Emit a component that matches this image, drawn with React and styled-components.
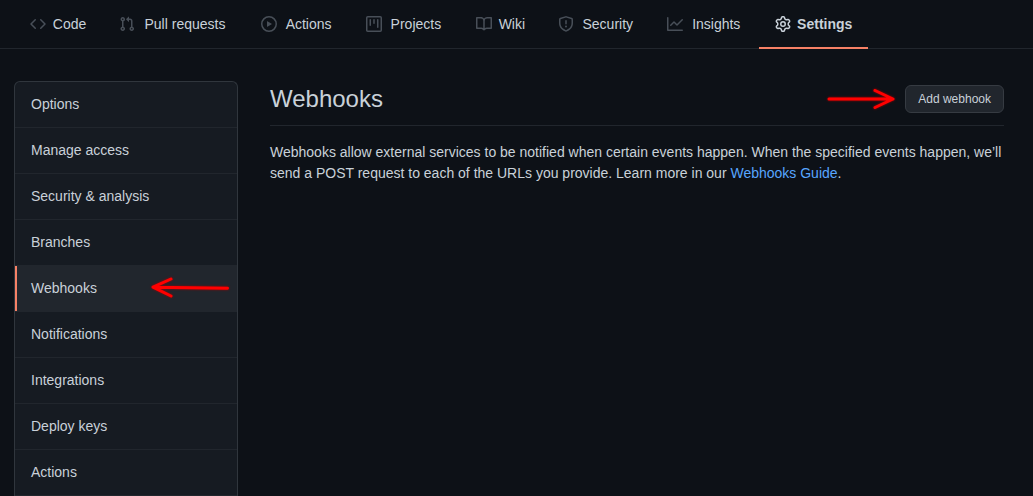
import React from 'react';
import styled, { createGlobalStyle, css } from 'styled-components';

const color = {
  canvas: '#0d1117',
  panel: '#161b22',
  raised: '#21262d',
  line: '#21262d',
  border: '#30363d',
  text: '#c9d1d9',
  faint: '#484f58',
  accent: '#f78166',
  link: '#58a6ff',
};

const GlobalStyle = createGlobalStyle`
  *, *::before, *::after { box-sizing: border-box; }
  body {
    margin: 0;
    background: ${color.canvas};
    color: ${color.text};
    font-family: "Liberation Sans", Arial, Helvetica, sans-serif;
    font-size: 14px;
    line-height: 21px;
  }
`;

const icons = {
  code: 'M4.72 3.22a.75.75 0 011.06 1.06L2.06 8l3.72 3.72a.75.75 0 11-1.06 1.06L.47 8.53a.75.75 0 010-1.06l4.25-4.25zm6.56 0a.75.75 0 10-1.06 1.06L13.94 8l-3.72 3.72a.75.75 0 101.06 1.06l4.25-4.25a.75.75 0 000-1.06l-4.25-4.25z',
  pull: 'M7.177 3.073L9.573.677A.25.25 0 0110 .854v4.792a.25.25 0 01-.427.177L7.177 3.427a.25.25 0 010-.354zM3.75 2.5a.75.75 0 100 1.5.75.75 0 000-1.5zm-2.25.75a2.25 2.25 0 113 2.122v5.256a2.251 2.251 0 11-1.5 0V5.372A2.25 2.25 0 011.5 3.25zM11 2.5h-1V4h1a1 1 0 011 1v5.628a2.251 2.251 0 101.5 0V5A2.5 2.5 0 0011 2.5zm1 10.25a.75.75 0 111.5 0 .75.75 0 01-1.5 0zM3.75 12a.75.75 0 100 1.5.75.75 0 000-1.5z',
  play: 'M1.5 8a6.5 6.5 0 1113 0 6.5 6.5 0 01-13 0zM8 0a8 8 0 100 16A8 8 0 008 0zM6.379 5.227A.25.25 0 006 5.442v5.117a.25.25 0 00.379.214l4.264-2.559a.25.25 0 000-.428L6.379 5.227z',
  project: 'M1.75 0A1.75 1.75 0 000 1.75v12.5C0 15.216.784 16 1.75 16h12.5A1.75 1.75 0 0016 14.25V1.75A1.75 1.75 0 0014.25 0H1.75zM1.5 1.75a.25.25 0 01.25-.25h12.5a.25.25 0 01.25.25v12.5a.25.25 0 01-.25.25H1.75a.25.25 0 01-.25-.25V1.75zM11.75 3a.75.75 0 00-.75.75v7.5a.75.75 0 001.5 0v-7.5a.75.75 0 00-.75-.75zm-8.25.75a.75.75 0 011.5 0v5.5a.75.75 0 01-1.5 0v-5.5zM8 3a.75.75 0 00-.75.75v3.5a.75.75 0 001.5 0v-3.5A.75.75 0 008 3z',
  book: 'M0 1.75A.75.75 0 01.75 1h4.253c1.227 0 2.317.59 3 1.501A3.744 3.744 0 0111.006 1h4.245a.75.75 0 01.75.75v10.5a.75.75 0 01-.75.75h-4.507a2.25 2.25 0 00-1.591.659l-.622.621a.75.75 0 01-1.06 0l-.622-.621A2.25 2.25 0 005.258 13H.75a.75.75 0 01-.75-.75V1.75zm8.755 3a2.25 2.25 0 012.25-2.25H14.5v9h-3.757c-.71 0-1.4.201-1.992.572l.004-7.322zm-1.504 7.324l.004-5.073-.002-2.253A2.25 2.25 0 005.003 2.5H1.5v9h3.757a3.75 3.75 0 011.994.574z',
  shield: 'M7.467.133a1.75 1.75 0 011.066 0l5.25 1.68A1.75 1.75 0 0115 3.48V7c0 1.566-.32 3.182-1.303 4.682-.983 1.498-2.585 2.813-5.032 3.855a1.7 1.7 0 01-1.33 0c-2.447-1.042-4.049-2.357-5.032-3.855C1.32 10.182 1 8.566 1 7V3.48a1.75 1.75 0 011.217-1.667l5.25-1.68zm.61 1.429a.25.25 0 00-.153 0l-5.25 1.68a.25.25 0 00-.174.238V7c0 1.358.275 2.666 1.057 3.86.784 1.194 2.121 2.34 4.366 3.297a.2.2 0 00.154 0c2.245-.956 3.582-2.104 4.366-3.298C13.225 9.666 13.5 8.36 13.5 7V3.48a.25.25 0 00-.174-.237l-5.25-1.68zM9 10.5a1 1 0 11-2 0 1 1 0 012 0zm-.25-5.75a.75.75 0 10-1.5 0v3a.75.75 0 001.5 0v-3z',
  graph: 'M1.5 1.75a.75.75 0 00-1.5 0v12.5c0 .414.336.75.75.75h14.5a.75.75 0 000-1.5H1.5V1.75zm14.28 2.53a.75.75 0 00-1.06-1.06L10 7.94 7.53 5.47a.75.75 0 00-1.06 0L3.22 8.72a.75.75 0 001.06 1.06L7 7.06l2.47 2.47a.75.75 0 001.06 0l5.25-5.25z',
  gear: 'M7.429 1.525a6.593 6.593 0 011.142 0c.036.003.108.036.137.146l.289 1.105c.147.56.55.967.997 1.189.174.086.341.183.501.29.417.278.97.423 1.53.27l1.102-.303c.11-.03.175.016.195.046.219.31.41.641.573.989.014.031.022.11-.059.19l-.815.806c-.411.406-.562.957-.53 1.456a4.588 4.588 0 010 .582c-.032.499.119 1.05.53 1.456l.815.806c.08.08.073.159.059.19a6.494 6.494 0 01-.573.99c-.02.029-.086.074-.195.045l-1.103-.303c-.559-.153-1.112-.008-1.529.27-.16.107-.327.204-.5.29-.449.222-.851.628-.998 1.189l-.289 1.105c-.029.11-.101.143-.137.146a6.613 6.613 0 01-1.142 0c-.036-.003-.108-.037-.137-.146l-.289-1.105c-.147-.56-.55-.967-.997-1.189a4.502 4.502 0 01-.501-.29c-.417-.278-.97-.423-1.53-.27l-1.102.303c-.11.03-.175-.016-.195-.046a6.492 6.492 0 01-.573-.989c-.014-.031-.022-.11.059-.19l.815-.806c.411-.406.562-.957.53-1.456a4.587 4.587 0 010-.582c.032-.499-.119-1.05-.53-1.456l-.815-.806c-.08-.08-.073-.159-.059-.19a6.44 6.44 0 01.573-.99c.02-.029.086-.075.195-.045l1.103.303c.559.153 1.112.008 1.529-.27.16-.107.327-.204.5-.29.449-.222.851-.628.998-1.189l.289-1.105c.029-.11.101-.143.137-.146zM8 0c-.236 0-.47.01-.701.03-.743.065-1.29.615-1.458 1.261l-.29 1.106c-.017.066-.078.158-.211.224a5.994 5.994 0 00-.668.386c-.123.082-.233.09-.3.071L3.27 2.776c-.644-.177-1.392.02-1.82.63a7.977 7.977 0 00-.704 1.217c-.315.675-.111 1.422.363 1.891l.815.806c.05.048.098.147.088.294a6.084 6.084 0 000 .772c.01.147-.038.246-.088.294l-.815.806c-.474.469-.678 1.216-.363 1.891.2.428.436.835.704 1.218.428.609 1.176.806 1.82.63l1.103-.303c.066-.019.176-.011.299.071.213.143.436.272.668.386.133.066.194.158.212.224l.289 1.106c.169.646.715 1.196 1.458 1.26a8.094 8.094 0 001.402 0c.743-.064 1.29-.614 1.458-1.26l.29-1.106c.017-.066.078-.158.211-.224a5.98 5.98 0 00.668-.386c.123-.082.233-.09.3-.071l1.102.302c.644.177 1.392-.02 1.82-.63.268-.382.505-.789.704-1.217.315-.675.111-1.422-.364-1.891l-.814-.806c-.05-.048-.098-.147-.088-.294a6.1 6.1 0 000-.772c-.01-.147.039-.246.088-.294l.814-.806c.475-.469.679-1.216.364-1.891a7.992 7.992 0 00-.704-1.218c-.428-.609-1.176-.806-1.82-.63l-1.103.303c-.066.019-.176.011-.299-.071a5.991 5.991 0 00-.668-.386c-.133-.066-.194-.158-.212-.224L10.16 1.29C9.99.645 9.444.095 8.701.031A8.094 8.094 0 008 0zm1.5 8a1.5 1.5 0 11-3 0 1.5 1.5 0 013 0zM11 8a3 3 0 11-6 0 3 3 0 016 0z',
};

const TabBar = styled.nav`
  display: flex;
  padding-left: 14px;
  border-bottom: 1px solid ${color.line};
`;

const Icon = styled.svg`
  flex: none;
  width: 16px;
  height: 16px;
  fill: ${(p) => (p.$active ? color.text : color.faint)};
`;

const Tab = styled.a`
  display: flex;
  align-items: center;
  gap: 6px;
  height: 49px;
  margin-bottom: -1px;
  padding: 1px 16px 0;
  border-bottom: 2px solid ${(p) => (p.$active ? color.accent : 'transparent')};
  color: ${color.text};
  font-weight: ${(p) => (p.$active ? 700 : 400)};
  text-decoration: none;
  white-space: nowrap;
`;

const TabLabel = styled.span`
  text-align: center;

  &::before {
    content: attr(data-content);
    display: block;
    height: 0;
    font-weight: 700;
    visibility: hidden;
  }
`;

const Page = styled.div`
  display: flex;
  align-items: flex-start;
  gap: 32px;
  padding: 32px 29px 0 14px;
`;

const Menu = styled.nav`
  flex: none;
  width: 224px;
  border: 1px solid ${color.border};
  border-bottom: 0;
  border-radius: 6px 6px 0 0;
  background: ${color.panel};
  overflow: hidden;
`;

const MenuLink = styled.a`
  display: flex;
  align-items: center;
  justify-content: space-between;
  height: 46px;
  padding: 0 8px 0 16px;
  border-bottom: 1px solid ${color.line};
  color: ${color.text};
  text-decoration: none;

  ${(p) =>
    p.$active &&
    css`
      background: linear-gradient(${color.accent}, ${color.accent}) left / 2px 100% no-repeat
        padding-box ${color.raised};
    `}
`;

const Main = styled.main`
  flex: 1;
  min-width: 0;
`;

const Subhead = styled.header`
  display: flex;
  align-items: center;
  gap: 9px;
  padding-bottom: 8px;
  border-bottom: 1px solid ${color.line};
`;

const Title = styled.h1`
  flex: 1;
  margin: 0;
  font-size: 24px;
  font-weight: 400;
  line-height: 36px;
`;

const Button = styled.button`
  height: 28px;
  padding: 0 12px;
  border: 1px solid #363b42;
  border-radius: 6px;
  background: ${color.raised};
  color: ${color.text};
  font: inherit;
  font-size: 12px;
  line-height: 20px;
  cursor: pointer;
`;

const Intro = styled.p`
  margin: 16px 0 0;
`;

const TextLink = styled.a`
  color: ${color.link};
  text-decoration: none;
`;

const Arrow = styled.svg`
  flex: none;
  height: 24px;
  fill: none;
  stroke: #ff0000;
  stroke-width: 3;
  stroke-linecap: round;
  stroke-linejoin: round;
  filter: drop-shadow(0 0 1px #a00000);
`;

const tabs = [
  ['Code', 'code'],
  ['Pull requests', 'pull'],
  ['Actions', 'play'],
  ['Projects', 'project'],
  ['Wiki', 'book'],
  ['Security', 'shield'],
  ['Insights', 'graph'],
  ['Settings', 'gear'],
];

const sections = [
  'Options',
  'Manage access',
  'Security & analysis',
  'Branches',
  'Webhooks',
  'Notifications',
  'Integrations',
  'Deploy keys',
  'Actions',
];

export default function App() {
  return (
    <>
      <GlobalStyle />
      <TabBar aria-label="Repository">
        {tabs.map(([label, icon]) => {
          const active = label === 'Settings';
          return (
            <Tab key={label} href="#" $active={active} aria-current={active ? 'page' : undefined}>
              <Icon viewBox="0 0 16 16" $active={active} aria-hidden="true">
                <path fillRule="evenodd" d={icons[icon]} />
              </Icon>
              <TabLabel data-content={label}>{label}</TabLabel>
            </Tab>
          );
        })}
      </TabBar>
      <Page>
        <Menu aria-label="Settings">
          {sections.map((label) => {
            const active = label === 'Webhooks';
            return (
              <MenuLink key={label} href="#" $active={active} aria-current={active ? 'page' : undefined}>
                {label}
                {active && (
                  <Arrow width="80" viewBox="0 0 80 24" aria-hidden="true">
                    <path d="M78.500 11.200L4 10.200M22 2L4 10.200L22 19" />
                  </Arrow>
                )}
              </MenuLink>
            );
          })}
        </Menu>
        <Main>
          <Subhead>
            <Title>Webhooks</Title>
            <Arrow width="70" viewBox="0 0 70 24" aria-hidden="true">
              <path d="M3 12H67M49 3.500L67 12L49 20.500" />
            </Arrow>
            <Button type="button">Add webhook</Button>
          </Subhead>
          <Intro>
            Webhooks allow external services to be notified when certain events happen. When the
            specified events happen, we’ll send a POST request to each of the URLs you provide.
            Learn more in our <TextLink href="#">Webhooks Guide</TextLink>.
          </Intro>
        </Main>
      </Page>
    </>
  );
}
